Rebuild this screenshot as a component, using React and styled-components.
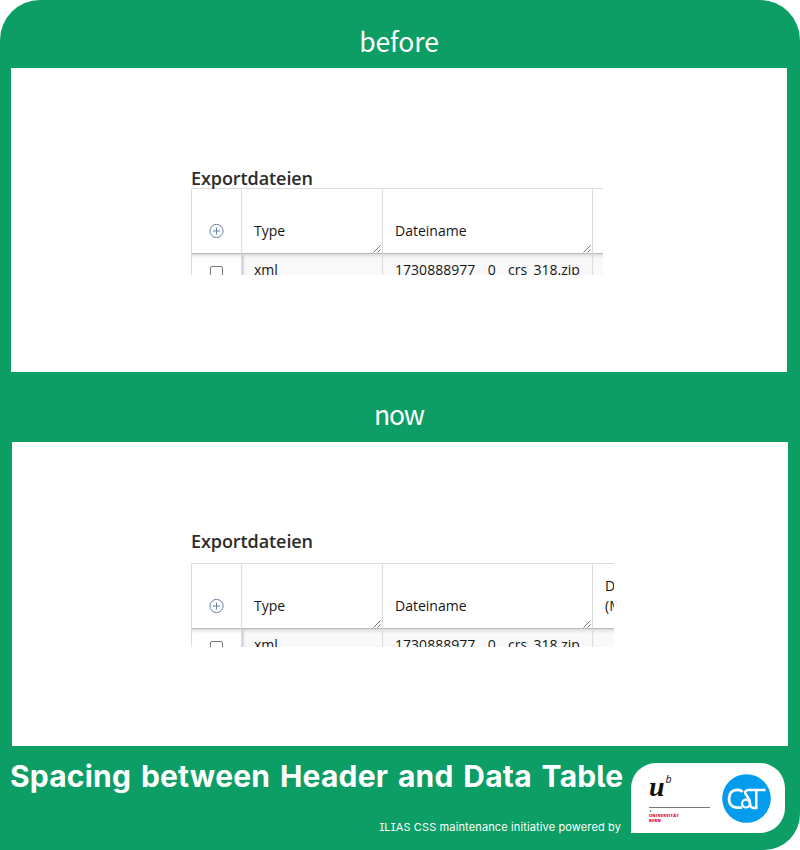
import React from "react";
import styled, { createGlobalStyle } from "styled-components";

const GlobalStyle = createGlobalStyle`
  *, *::before, *::after { box-sizing: border-box; }
  body { margin: 0; background: #fff; }
`;

const Poster = styled.main`
  display: flex;
  flex-direction: column;
  width: 800px;
  height: 850px;
  overflow: hidden;
  background: #0c9e64;
  border-radius: 40px 40px 36px 0;
  color: #fff;
  font-family: Inter, sans-serif;
`;

const Caption = styled.h2`
  flex: none;
  height: ${(p) => p.$height}px;
  margin: 0;
  padding: ${(p) => p.$top}px 2px 0 0;
  text-align: center;
  font: 400 26.5px/32px "Noto Sans CJK SC", sans-serif;
  letter-spacing: ${(p) => p.$tracking}px;
`;

const Panel = styled.section`
  flex: none;
  width: 776px;
  height: 304px;
  margin-left: ${(p) => p.$left}px;
  padding: ${(p) => p.$top}px 0 0 ${(p) => 191 - p.$left}px;
  background: #fff;
  color: #161616;
  font-family: "Open Sans", sans-serif;
`;

const TableTitle = styled.h3`
  height: ${(p) => p.$height}px;
  margin: 0;
  font-size: 18px;
  line-height: 24px;
  font-weight: 600;
  letter-spacing: -0.08px;
  color: #2c2c2c;
`;

const TableClip = styled.div`
  width: ${(p) => p.$width}px;
  height: ${(p) => p.$height}px;
  overflow: hidden;
  font-size: 14px;
  line-height: 20px;
`;

const Grid = styled.div`
  display: grid;
  grid-template-columns: 50px 141px 210px 130px;
  grid-template-rows: 66px 40px;
  border-top: 1px solid #ddd;
`;

const HeadCell = styled.div`
  display: flex;
  align-items: flex-end;
  justify-content: ${(p) => (p.$center ? "center" : "space-between")};
  height: 65px;
  padding: 0 0 12px ${(p) => (p.$center ? 0 : 12)}px;
  border-left: 1px solid #ddd;
  border-bottom: 1px solid #bbb;
  white-space: pre;
`;

const BodyCell = styled.div`
  height: 41px;
  margin-top: -1px;
  padding: 6px 0 0 12px;
  border-left: 1px solid #ddd;
  background: #f9f9f9;
  letter-spacing: 0.03px;
  box-shadow: inset 0 4px 4px -3px #ccc${(p) => (p.$first ? ", inset 3px 0 3px -2px #bbb" : "")};
`;

const CheckCell = styled(BodyCell)`
  padding: 12px 0 0 18px;
  background: #fff;
`;

const Checkbox = styled.span`
  display: block;
  width: 13px;
  height: 13px;
  border: 1px solid #767676;
  border-radius: 2px;
`;

const Plus = styled.svg`
  display: block;
  margin-bottom: 2px;
`;

const Grip = styled.svg`
  flex: none;
  margin: 0 1px -12px 0;
`;

const Footer = styled.footer`
  display: flex;
  flex: 1;
`;

const FooterText = styled.div`
  display: flex;
  flex-direction: column;
  width: 631px;
  padding: 11px 0 0 10px;
  white-space: nowrap;
  font-feature-settings: "cv05", "cv08";
`;

const Title = styled.h1`
  margin: 0;
  font-size: 30px;
  line-height: 38px;
  font-weight: 700;
  letter-spacing: 0.2px;
  word-spacing: 2.5px;
`;

const Credit = styled.p`
  margin: 24px 10px 0 0;
  text-align: right;
  font-size: 11px;
  line-height: 16px;
  letter-spacing: 0.13px;
`;

const LogoCard = styled.div`
  display: flex;
  width: 154px;
  height: 70px;
  margin-top: 17px;
  background: #fff;
  border-radius: 25px 25px 25px 0;
`;

const UniLogo = styled.div`
  width: 61px;
  margin: 9px 12px 0 18px;
  color: #111;
`;

const UniMark = styled.div`
  display: flex;
  height: 36px;
  border-bottom: 1px solid #777;
`;

const UniU = styled.span`
  font: italic 700 28px/30px "Liberation Serif", serif;
`;

const UniB = styled.span`
  font: italic 400 10.5px/15px "Noto Sans", sans-serif;
  margin-left: 1px;
`;

const UniName = styled.div`
  color: #e5003d;
  font: 800 4px/5px "Open Sans", sans-serif;
  letter-spacing: 0.3px;
`;

const UniTick = styled.div`
  width: 1px;
  height: 2px;
  margin: 2px 0 1px 1px;
  background: #777;
`;

const CatLogo = styled.svg`
  margin-top: 11px;
`;

function AddIcon() {
  return (
    <Plus width="15" height="15" viewBox="0 0 15 15" fill="none" stroke="#6380a8">
      <circle cx="7.5" cy="7" r="6.6" />
      <path d="M7.5 3.5v7M4 7h7" />
    </Plus>
  );
}

function ResizeGrip() {
  return (
    <Grip width="8" height="8" viewBox="0 0 8 8" stroke="#666" strokeWidth="0.9">
      <path d="M.5 7.5 7.5.5M4.5 7.5l3-3" />
    </Grip>
  );
}

function ExportTable({ width, height, lastLabel }) {
  return (
    <TableClip $width={width} $height={height}>
      <Grid>
        <HeadCell $center><AddIcon /></HeadCell>
        <HeadCell>Type<ResizeGrip /></HeadCell>
        <HeadCell>Dateiname<ResizeGrip /></HeadCell>
        <HeadCell>{lastLabel}</HeadCell>
        <CheckCell><Checkbox /></CheckCell>
        <BodyCell $first>xml</BodyCell>
        <BodyCell>1730888977__0__crs_318.zip</BodyCell>
        <BodyCell />
      </Grid>
    </TableClip>
  );
}

export default function App() {
  return (
    <>
      <GlobalStyle />
      <Poster>
        <Caption $height={68} $top={25} $tracking={-0.1}>before</Caption>
        <Panel $left={11} $top={98}>
          <TableTitle $height={22}>Exportdateien</TableTitle>
          <ExportTable width={412} height={87} />
        </Panel>
        <Caption $height={70} $top={26} $tracking={-1.2}>now</Caption>
        <Panel $left={12} $top={87}>
          <TableTitle $height={34}>Exportdateien</TableTitle>
          <ExportTable width={423} height={84} lastLabel={"Datum\n(MEZ)"} />
        </Panel>
        <Footer>
          <FooterText>
            <Title>Spacing between Header and Data Table</Title>
            <Credit>ILIAS CSS maintenance initiative powered by</Credit>
          </FooterText>
          <LogoCard>
            <UniLogo>
              <UniMark><UniU>u</UniU><UniB>b</UniB></UniMark>
              <UniTick />
              <UniName>UNIVERSITÄT<br />BERN</UniName>
            </UniLogo>
            <CatLogo width="49" height="49" viewBox="0 0 49 49" fill="none" stroke="#fff" strokeWidth="2.8">
              <circle cx="24.5" cy="24.5" r="24.3" fill="#049ced" stroke="none" />
              <path d="M20.5 18C19.5 16.3 17.8 15.8 15.5 15.8C10 15.8 7 19.5 7 24.7C7 30 10 33.6 15.5 33.6H20" />
              <circle cx="24" cy="29.6" r="3.9" strokeWidth="2.2" />
              <path d="M43.5 16H26.5C23.5 16 22.3 18 23.8 20.3C26 23.5 28 25 28.2 30C28.3 33.5 30 34 34.3 34V16" strokeWidth="2.5" />
            </CatLogo>
          </LogoCard>
        </Footer>
      </Poster>
    </>
  );
}
